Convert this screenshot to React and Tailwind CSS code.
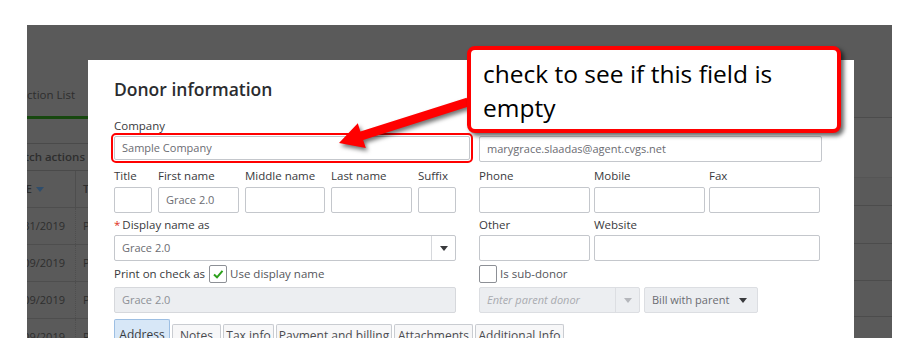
import React from "react";

function Caret({ className = "" }) {
  return (
    <svg width="8" height="5" viewBox="0 0 8 5" className={`shrink-0 ${className}`}>
      <polygon points="0,0 8,0 4,5" fill="currentColor" />
    </svg>
  );
}

function Label({ children, className = "" }) {
  return (
    <div
      className={`h-[14px] whitespace-nowrap text-[11.5px] font-medium leading-[14px] text-[#393a3d] ${className}`}
    >
      {children}
    </div>
  );
}

function Box({ children, className = "" }) {
  return (
    <div
      className={`flex h-[26px] items-center whitespace-nowrap rounded-[2px] border border-[#c4c7cc] bg-white px-[7px] text-[11px] text-[#6b6c72] ${className}`}
    >
      {children}
    </div>
  );
}

function Field({ label, value, width }) {
  return (
    <div className={width}>
      <Label className="mb-[4px]">{label}</Label>
      <Box>{value}</Box>
    </div>
  );
}

function BackdropLeft() {
  const rows = ["01/31/2019", "10/09/2019", "10/09/2019", "09/09/2019"];
  return (
    <div className="flex w-[61px] flex-col overflow-hidden text-[11.5px] text-[#2e2e2e]">
      <div className="h-[60px] shrink-0" />
      <div className="flex h-[20px] shrink-0 items-center justify-end whitespace-nowrap pr-[13px]">
        Transaction List
      </div>
      <div className="h-[11px] shrink-0" />
      <div className="h-[3px] shrink-0 bg-[#17480f]" />
      <div className="h-[25px] shrink-0 border-b border-[#4a4a4a]" />
      <div className="flex h-[27px] shrink-0 items-center justify-end whitespace-nowrap border-b border-[#4a4a4a] pr-[3px] font-semibold">
        Batch actions
      </div>
      <div className="flex h-[37px] shrink-0 border-b border-[#4e4e4e]">
        <div className="flex w-[48px] items-center justify-end gap-[4px] whitespace-nowrap pr-[31px] text-[11px] font-semibold">
          DATE <Caret className="text-[#2f4d6b]" />
        </div>
        <div className="flex flex-1 items-center border-l border-[#4e4e4e] pl-[7px] text-[11px] font-semibold">
          TYPE
        </div>
      </div>
      {rows.map((d, i) => (
        <div key={i} className="flex h-[37px] shrink-0 border-b border-[#4e4e4e]">
          <div className="flex w-[48px] items-center justify-end whitespace-nowrap pr-[10px] text-[11px]">
            {d}
          </div>
          <div className="flex flex-1 items-center border-l border-dotted border-[#4e4e4e] pl-[7px] text-[11px]">
            P
          </div>
        </div>
      ))}
    </div>
  );
}

function BackdropRight() {
  return (
    <div className="flex w-[38px] flex-col">
      <div className="h-[93px] shrink-0 border-b border-[#4c4c4c]" />
      <div className="h-[60px] shrink-0 border-b border-[#555555] bg-[#5c5c5c]" />
      <div className="h-[28px] shrink-0 border-b border-[#4c4c4c]" />
      <div className="h-[38px] shrink-0 border-b border-[#4c4c4c]" />
      <div className="h-[37px] shrink-0 border-b border-[#4c4c4c]" />
      <div className="h-[36px] shrink-0 border-b border-[#4c4c4c]" />
    </div>
  );
}

function Tab({ children, active, width }) {
  return active ? (
    <div
      className={`h-[26px] shrink-0 rounded-t-[2px] border border-b-0 border-[#9dbfe3] bg-[#d7e7f7] pt-[6px] text-center text-[12px] text-[#393a3d] ${width}`}
    >
      {children}
    </div>
  ) : (
    <div
      className={`h-[21px] shrink-0 rounded-t-[2px] border border-b-0 border-[#c9ccd1] bg-[#f7f7f8] pt-[2px] text-center text-[12px] text-[#4a4b50] ${width}`}
    >
      {children}
    </div>
  );
}

function Dialog() {
  return (
    <div className="mt-[35px] w-[766px] bg-white pl-[26px] pr-[32px] pt-[17px]">
      <h1 className="h-[24px] text-[17.5px] font-semibold leading-[24px] text-[#2b2c2f]">
        Donor information
      </h1>

      <div className="mt-[18px] flex">
        <div className="w-[356px]">
          <Label className="mb-[3px]">Company</Label>
          <div className="flex h-[24px] items-center whitespace-nowrap rounded-[2px] border border-[#c4c7cc] bg-white px-[7px] text-[11px] text-[#6b6c72] outline-2 outline-offset-[1px] outline-[#ff0000]">
            Sample Company
          </div>
        </div>
        <div className="ml-[9px] w-[343px]">
          <div className="mb-[3px] h-[14px]" />
          <Box>marygrace.slaadas@agent.cvgs.net</Box>
        </div>
      </div>

      <div className="mt-[7px] flex">
        <div className="flex w-[342px] justify-between">
          <Field label="Title" width="w-[38px]" />
          <Field label="First name" value="Grace 2.0" width="w-[81px]" />
          <Field label="Middle name" width="w-[80px]" />
          <Field label="Last name" width="w-[81px]" />
          <Field label="Suffix" width="w-[38px]" />
        </div>
        <div className="ml-[23px] flex gap-[4px]">
          <Field label="Phone" width="w-[111px]" />
          <Field label="Mobile" width="w-[111px]" />
          <Field label="Fax" width="w-[111px]" />
        </div>
      </div>

      <div className="mt-[5px] flex">
        <div className="w-[342px]">
          <Label className="mb-[3px]">
            <span className="mr-[2px] text-[#e0301e]">*</span>Display name as
          </Label>
          <div className="flex h-[26px] rounded-[2px] border border-[#c4c7cc] bg-white text-[11px] text-[#6b6c72]">
            <div className="flex flex-1 items-center px-[7px]">Grace 2.0</div>
            <div className="flex w-[24px] items-center justify-center border-l border-[#d6d8dc] text-[#393a3d]">
              <Caret />
            </div>
          </div>
        </div>
        <div className="ml-[23px] flex gap-[4px]">
          <div className="w-[111px]">
            <Label className="mb-[3px]">Other</Label>
            <Box />
          </div>
          <div className="w-[226px]">
            <Label className="mb-[3px]">Website</Label>
            <Box />
          </div>
        </div>
      </div>

      <div className="mt-[4px] flex h-[18px]">
        <div className="flex w-[342px] items-center">
          <span className="whitespace-nowrap text-[11.5px] font-medium text-[#393a3d]">
            Print on check as
          </span>
          <div className="ml-[4px] flex h-[18px] w-[18px] items-center justify-center rounded-[2px] border border-[#8d9096] bg-white">
            <svg width="12" height="12" viewBox="0 0 12 12">
              <path d="M2 6.5 L5 9.3 L10.5 2.8" fill="none" stroke="#2ca01c" strokeWidth="2" />
            </svg>
          </div>
          <span className="ml-[3px] whitespace-nowrap text-[11.5px] text-[#55565b]">
            Use display name
          </span>
        </div>
        <div className="ml-[23px] flex items-center">
          <div className="h-[18px] w-[18px] rounded-[2px] border border-[#8d9096] bg-white" />
          <span className="ml-[3px] whitespace-nowrap text-[11.5px] text-[#55565b]">
            Is sub-donor
          </span>
        </div>
      </div>

      <div className="mt-[4px] flex">
        <div className="flex h-[26px] w-[342px] items-center rounded-[2px] border border-[#d6d8dc] bg-[#eceef1] px-[7px] text-[11px] text-[#8d9096]">
          Grace 2.0
        </div>
        <div className="ml-[23px] flex h-[26px] w-[161px] rounded-[2px] border border-[#dcdee2] bg-[#eceef1] text-[11px]">
          <div className="flex flex-1 items-center px-[7px] italic text-[#a9abb0]">
            Enter parent donor
          </div>
          <div className="flex w-[24px] items-center justify-center border-l border-[#dcdee2] text-[#b5b7bc]">
            <Caret />
          </div>
        </div>
        <div className="ml-[4px] flex h-[26px] w-[114px] items-center justify-between rounded-[2px] border border-[#dcdee2] bg-[#eceef1] pl-[7px] pr-[10px] text-[11px] text-[#6b6c72]">
          Bill with parent
          <Caret className="text-[#393a3d]" />
        </div>
      </div>

      <div className="mt-[6px] flex h-[26px] items-end gap-[2px]">
        <Tab active width="w-[56px]">Address</Tab>
        <Tab width="w-[49px]">Notes</Tab>
        <Tab width="w-[51px]">Tax info</Tab>
        <Tab width="w-[116px]">Payment and billing</Tab>
        <Tab width="w-[79px]">Attachments</Tab>
        <Tab width="w-[89px]">Additional Info</Tab>
      </div>
    </div>
  );
}

function Arrow() {
  return (
    <svg
      width="908"
      height="338"
      className="pointer-events-none absolute left-0 top-0 drop-shadow-[2px_3px_2px_rgba(0,0,0,0.55)]"
    >
      <polygon
        points="466.6,97.7 360.4,131.4 357.8,123.3 339,143 365.8,148.1 363.2,140 469.4,106.3"
        fill="#ff0000"
      />
    </svg>
  );
}

function Callout() {
  return (
    <div className="absolute left-[467px] top-[46px] h-[87px] w-[374px] rounded-[8px] border-4 border-[#ff0000] bg-white pl-[12px] pt-[7px] font-['Open_Sans',sans-serif] text-[24.5px] leading-[34px] text-black shadow-[3px_3px_4px_rgba(0,0,0,0.6)]">
      check to see if this field is
      <br />
      empty
    </div>
  );
}

export default function App() {
  return (
    <div className="relative h-[338px] w-[908px] overflow-hidden bg-white font-['Open_Sans',sans-serif]">
      <div className="ml-[27px] mt-[25px] flex h-[313px] w-[865px] bg-[#5a5a5a]">
        <BackdropLeft />
        <Dialog />
        <BackdropRight />
      </div>
      <Arrow />
      <Callout />
    </div>
  );
}
